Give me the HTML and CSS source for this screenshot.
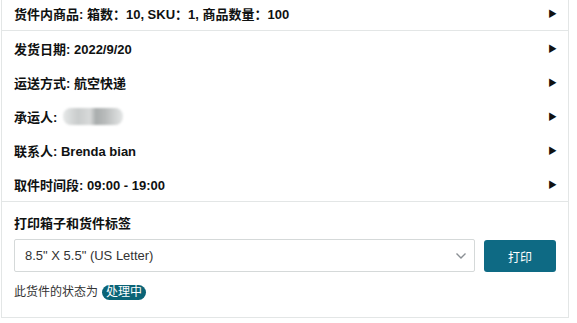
FILE: index.html
```html
<!DOCTYPE html>
<html lang="zh">
<head>
<meta charset="utf-8">
<link rel="stylesheet" href="styles.css">
</head>
<body>
<div class="card">
  <div class="row row-top">
    <span class="label">货件内商品: 箱数：10, SKU：1, 商品数量：100</span>
    <span class="arrow">&#9654;</span>
  </div>
  <div class="group">
    <div class="row"><span class="label">发货日期: 2022/9/20</span><span class="arrow">&#9654;</span></div>
    <div class="row"><span class="label">运送方式: 航空快递</span><span class="arrow">&#9654;</span></div>
    <div class="row"><span class="label">承运人: <span class="blur"></span></span><span class="arrow">&#9654;</span></div>
    <div class="row"><span class="label">联系人: Brenda bian</span><span class="arrow">&#9654;</span></div>
    <div class="row"><span class="label">取件时间段: 09:00 - 19:00</span><span class="arrow">&#9654;</span></div>
  </div>
  <div class="print">
    <div class="title">打印箱子和货件标签</div>
    <div class="controls">
      <div class="select">
        <span>8.5" X 5.5" (US Letter)</span>
        <svg class="chev" width="12" height="8" viewBox="0 0 12 8"><path d="M1.5 1.5 L6 6 L10.5 1.5" fill="none" stroke="#8a8f94" stroke-width="1.4"/></svg>
      </div>
      <div class="btn">打印</div>
    </div>
    <div class="status">此货件的状态为 <span class="badge">处理中</span></div>
  </div>
</div>
</body>
</html>
```
FILE: styles.css
```css
html, body {
  margin: 0;
  padding: 0;
  background: #ffffff;
}
body {
  font-family: "Liberation Sans", "Noto Sans CJK SC", sans-serif;
  color: #0f1111;
}
.card {
  box-sizing: border-box;
  width: 568px;
  margin: -5px 0 0 1px;
  border: 1px solid #e3e6e6;
  background: #fff;
}
.row {
  height: 34px;
  display: flex;
  align-items: center;
  justify-content: space-between;
  padding: 0 12px 0 12px;
}
.row-top {
  border-bottom: 1px solid #e3e6e6;
  height: 34px;
}
.group {
  border-bottom: 1px solid #e3e6e6;
}
.label {
  font-size: 13px;
  font-weight: bold;
  display: flex;
  align-items: center;
  white-space: pre;
}
.arrow {
  font-size: 9px;
  color: #111;
  margin-right: -1px;
}
.blur {
  display: inline-block;
  width: 60px;
  height: 17px;
  border-radius: 8px;
  background: linear-gradient(90deg, #e6e8e8 0%, #c9cccc 25%, #d8dada 45%, #a9adad 55%, #b8bbbb 70%, #e4e6e6 100%);
  filter: blur(1px);
  margin-left: 2px;
}
.print {
  padding: 12px 12px 15px 12px;
}
.title {
  font-size: 13px;
  font-weight: bold;
  line-height: 20px;
}
.controls {
  display: flex;
  gap: 9px;
  margin-top: 5px;
}
.select {
  box-sizing: border-box;
  width: 462px;
  height: 33px;
  border: 1px solid #d5d9d9;
  border-radius: 2px;
  display: flex;
  align-items: center;
  justify-content: space-between;
  padding: 0 7px 0 10px;
  font-size: 13px;
  color: #333;
}
.btn {
  box-sizing: border-box;
  width: 72px;
  height: 32px;
  margin-top: 1px;
  background: #0e6a84;
  color: #fff;
  border-radius: 3px;
  display: flex;
  align-items: center;
  justify-content: center;
  font-size: 12px;
}
.status {
  margin-top: 10px;
  line-height: 20px;
  font-size: 12px;
  color: #333;
  display: flex;
  align-items: center;
}
.badge {
  display: inline-block;
  background: #0b6477;
  color: #fff;
  font-size: 12px;
  line-height: 15px;
  padding: 0 4px;
  border-radius: 8px;
  margin-left: 4px;
}
```
